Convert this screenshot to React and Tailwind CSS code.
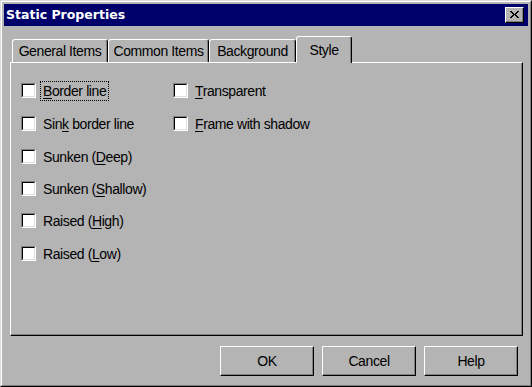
import React from "react";

const font = { fontFamily: '"Liberation Sans", Arial, sans-serif' };

function U({ children }) {
  return <span className="underline underline-offset-[2px] decoration-1">{children}</span>;
}

function Check({ children, focus }) {
  return (
    <div className="flex items-center h-[15px]">
      <span className="w-[15px] h-[15px] shrink-0 border border-t-[#808080] border-l-[#808080] border-r-white border-b-white">
        <span className="block w-full h-full bg-white border border-t-black border-l-black border-r-[#dfdfdf] border-b-[#dfdfdf]" />
      </span>
      <span
        className={
          "ml-[5px] px-[2px] leading-[18px] text-[14px] tracking-[-0.4px] text-black whitespace-nowrap " +
          (focus ? "outline outline-1 outline-dotted outline-black" : "")
        }
      >
        {children}
      </span>
    </div>
  );
}

function Tab({ children, w }) {
  return (
    <div
      className={`${w} h-[23px] flex items-center justify-center border-t border-l border-t-white border-l-white border-r border-r-black shadow-[inset_-1px_0_0_#808080] rounded-t-[3px] text-[14px] tracking-[-0.4px] text-black`}
    >
      {children}
    </div>
  );
}

function Btn({ children }) {
  return (
    <div className="w-[94px] h-[30px] flex items-center justify-center border border-t-white border-l-white border-r-black border-b-black shadow-[inset_-1px_-1px_0_#808080] text-[14px] tracking-[-0.4px] text-black">
      {children}
    </div>
  );
}

export default function App() {
  return (
    <div style={font} className="w-[532px] h-[387px] bg-[#b4b4b4] border border-t-[#dcdcdc] border-l-[#dcdcdc] border-r-black border-b-black">
      <div className="w-full h-full border border-t-white border-l-white border-r-[#808080] border-b-[#808080] p-[2px] flex flex-col">
        {/* Title bar */}
        <div className="h-[22px] bg-[#00006b] flex items-center justify-between pl-[2px] pr-[4px]">
          <span
            className="text-white font-bold text-[12.5px] leading-none"
            style={{ fontFamily: '"DejaVu Sans", Verdana, sans-serif' }}
          >
            Static Properties
          </span>
          <div className="w-[19px] h-[16px] bg-[#b4b4b4] border border-t-white border-l-white border-r-black border-b-black shadow-[inset_-1px_-1px_0_#808080] flex items-center justify-center">
            <svg width="9" height="8" viewBox="0 0 9 8" shapeRendering="crispEdges">
              <path d="M0 0h2v1h1v1h1v1h1v-1h1v-1h1v-1h2v1h-1v1h-1v1h-1v1h1v1h1v1h1v1h-2v-1h-1v-1h-1v-1h-1v1h-1v1h-1v1h-2v-1h1v-1h1v-1h1v-1h-1v-1h-1v-1h-1z" fill="black" />
            </svg>
          </div>
        </div>

        {/* Tabs */}
        <div className="mt-[10px] ml-[6px] flex items-end h-[26px] pl-[2px] relative z-10">
          <Tab w="w-[96px]">General Items</Tab>
          <Tab w="w-[101px]">Common Items</Tab>
          <Tab w="w-[87px]">Background</Tab>
          <div className="w-[56px] h-[27px] mb-[-1px] bg-[#b4b4b4] flex items-start justify-center pt-[3px] border-t border-l border-t-white border-l-white border-r border-r-black shadow-[inset_-1px_0_0_#808080] rounded-t-[3px] text-[14px] tracking-[-0.4px] text-black">
            Style
          </div>
        </div>

        {/* Panel */}
        <div className="ml-[6px] w-[513px] h-[274px] border border-t-white border-l-white border-r-black border-b-black shadow-[inset_-1px_-1px_0_#808080] pt-[20px] pl-[10px] flex">
          <div className="w-[152px] flex flex-col">
            <div className="h-[33px]"><Check focus><U>B</U>order line</Check></div>
            <div className="h-[33px]"><Check>Sin<U>k</U> border line</Check></div>
            <div className="h-[32px]"><Check>Sunken (<U>D</U>eep)</Check></div>
            <div className="h-[32px]"><Check>Sunken (<U>S</U>hallow)</Check></div>
            <div className="h-[33px]"><Check>Raised (<U>H</U>igh)</Check></div>
            <div className="h-[33px]"><Check>Raised (<U>L</U>ow)</Check></div>
          </div>
          <div className="flex flex-col">
            <div className="h-[33px]"><Check><U>T</U>ransparent</Check></div>
            <div className="h-[33px]"><Check><U>F</U>rame with shadow</Check></div>
          </div>
        </div>

        {/* Buttons */}
        <div className="mt-[10px] flex justify-end gap-[8px] pr-[10px]">
          <Btn>OK</Btn>
          <Btn>Cancel</Btn>
          <Btn>Help</Btn>
        </div>
      </div>
    </div>
  );
}
